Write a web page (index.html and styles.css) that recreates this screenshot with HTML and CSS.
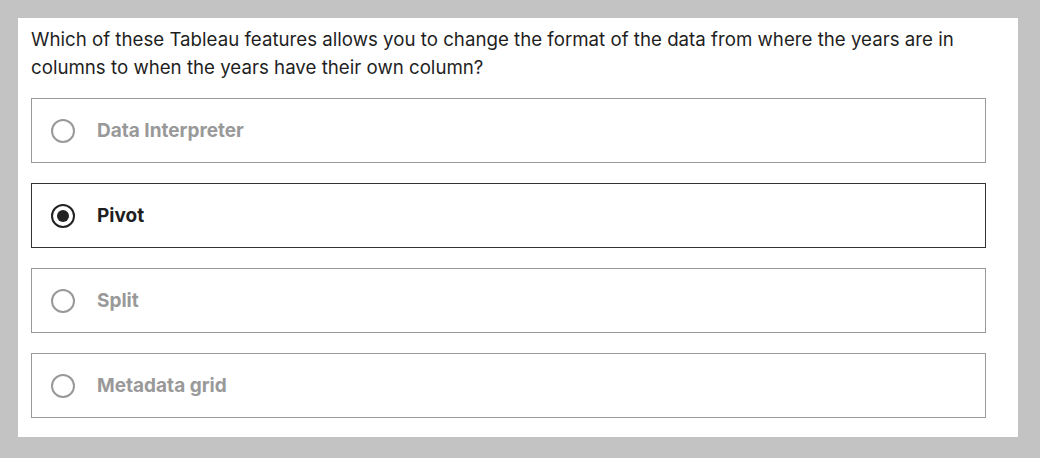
FILE: index.html
```html
<!DOCTYPE html>
<html>
<head>
<meta charset="utf-8">
<link rel="stylesheet" href="styles.css">
</head>
<body>
<div class="card">
  <p class="question">Which of these Tableau features allows you to change the format of the data from where the years are in columns to when the years have their own column?</p>
  <div class="options">
    <label class="option"><span class="radio"></span><span class="label">Data Interpreter</span></label>
    <label class="option selected"><span class="radio"></span><span class="label">Pivot</span></label>
    <label class="option"><span class="radio"></span><span class="label">Split</span></label>
    <label class="option"><span class="radio"></span><span class="label">Metadata grid</span></label>
  </div>
</div>
</body>
</html>
```
FILE: styles.css
```css
html, body { margin: 0; padding: 0; }
body {
  background: #c3c3c3;
  width: 1040px;
  height: 458px;
  padding: 18px;
  box-sizing: border-box;
  font-family: Inter, "Open Sans", sans-serif;
}
.card {
  background: #fff;
  width: 1000px;
  height: 419px;
  box-sizing: border-box;
  padding: 8px 32px 0 13px;
}
.question {
  margin: 0;
  font-size: 18.7px;
  line-height: 28px;
  color: #1f1f1f;
}
.options {
  display: flex;
  flex-direction: column;
  gap: 20px;
  margin-top: 16px;
}
.option {
  display: flex;
  align-items: center;
  height: 65px;
  box-sizing: border-box;
  border: 1px solid #999;
  padding-left: 19px;
}
.option.selected { border-color: #333; }
.radio {
  width: 24px;
  height: 24px;
  box-sizing: border-box;
  border: 2px solid #999;
  border-radius: 50%;
  display: flex;
  align-items: center;
  justify-content: center;
  margin-right: 22px;
}
.selected .radio { border-color: #222; }
.selected .radio::after {
  content: "";
  width: 12px;
  height: 12px;
  border-radius: 50%;
  background: #222;
}
.label {
  font-size: 19px;
  font-weight: 700;
  color: #999;
}
.selected .label { color: #1f1f1f; }
```
